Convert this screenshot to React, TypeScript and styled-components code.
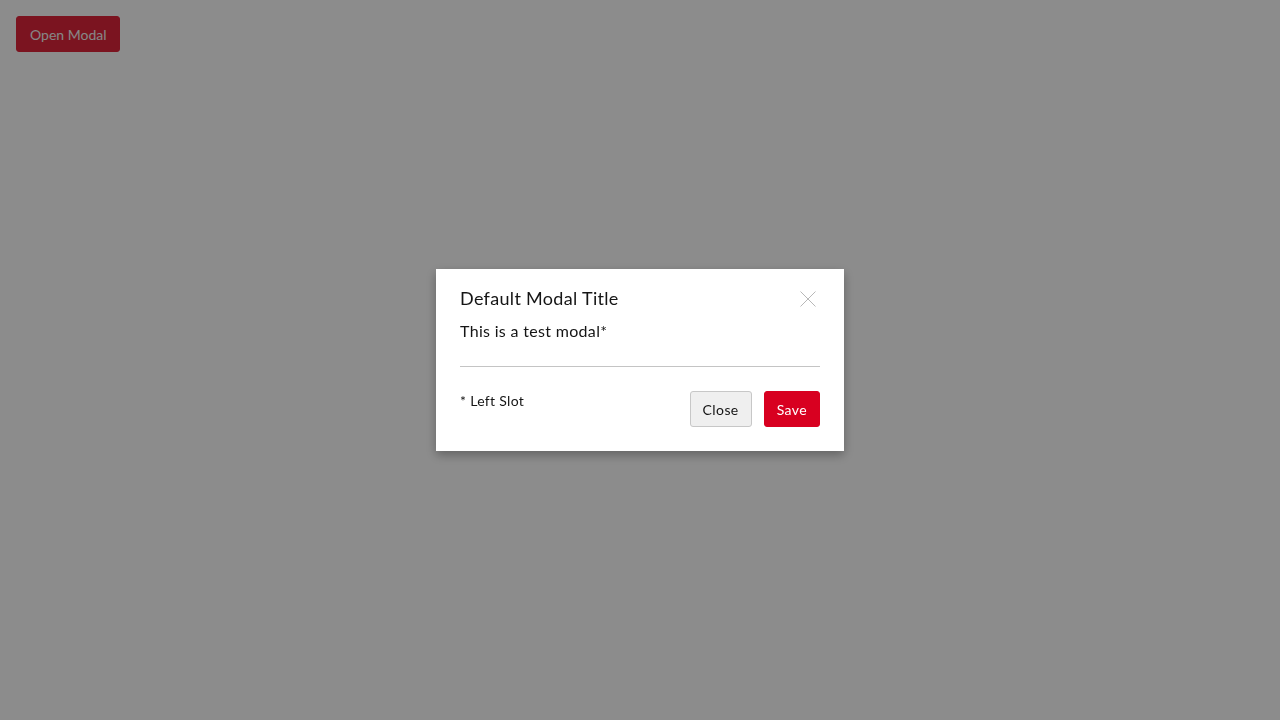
import styled, { createGlobalStyle } from 'styled-components';

const GlobalStyle = createGlobalStyle`
    html, body {
        margin: 0;
        background: #ffffff;
        font-family: 'Lato', 'Open Sans', sans-serif;
        letter-spacing: 0.32px;
        color: #151515;
    }
`;

const App = () => {
    return (
        <>
            <GlobalStyle />
            <StyledPage>
                <StyledTriggerButton $variant="primary">Open Modal</StyledTriggerButton>
            </StyledPage>
            <StyledBackdrop>
                <StyledModal role="dialog" aria-labelledby="modal-title">
                    <StyledHeader>
                        <StyledTitle id="modal-title">Default Modal Title</StyledTitle>
                        <StyledCloseIcon aria-label="Close">
                            <svg width="16" height="16" viewBox="0 0 16 16">
                                <path
                                    d="M0.5 0.5 L15.5 15.5 M15.5 0.5 L0.5 15.5"
                                    stroke="#b8b8b8"
                                    strokeWidth="1"
                                    fill="none"
                                />
                            </svg>
                        </StyledCloseIcon>
                    </StyledHeader>
                    <StyledBody>This is a test modal*</StyledBody>
                    <StyledDivider />
                    <StyledFooter>
                        <StyledLeftSlot>* Left Slot</StyledLeftSlot>
                        <StyledActions>
                            <StyledButton $variant="secondary">Close</StyledButton>
                            <StyledButton $variant="primary">Save</StyledButton>
                        </StyledActions>
                    </StyledFooter>
                </StyledModal>
            </StyledBackdrop>
        </>
    );
};

const StyledPage = styled.div`
    display: flex;
    padding: 16px;
    min-height: 100vh;
    box-sizing: border-box;
    align-items: flex-start;
`;

const StyledButton = styled.button<{ $variant: 'primary' | 'secondary' }>`
    height: 36px;
    padding: 0 12px;
    font-family: inherit;
    font-size: 14px;
    letter-spacing: 0.4px;
    border-radius: 3px;
    cursor: pointer;
    border: 1px solid
        ${({ $variant }) => ($variant === 'primary' ? '#d80020' : '#c7c7c7')};
    background-color: ${({ $variant }) =>
        $variant === 'primary' ? '#d80020' : '#efefef'};
    color: ${({ $variant }) => ($variant === 'primary' ? '#ffffff' : '#151515')};
`;

// the trigger sits in its hover state behind the backdrop
const StyledTriggerButton = styled(StyledButton)`
    letter-spacing: 0;
    padding: 0 12px 0 13px;
    border-color: #e0263b;
    background-color: #e0263b;
    color: #f4f4f4;
`;

const StyledBackdrop = styled.div`
    position: fixed;
    inset: 0;
    display: flex;
    align-items: center;
    justify-content: center;
    background-color: rgba(0, 0, 0, 0.45);
`;

const StyledModal = styled.div`
    width: 408px;
    box-sizing: border-box;
    padding: 19px 24px 24px;
    background-color: #ffffff;
    box-shadow: 0 4px 10px rgba(0, 0, 0, 0.3);
    display: flex;
    flex-direction: column;
`;

const StyledHeader = styled.div`
    display: flex;
    align-items: center;
    justify-content: space-between;
`;

const StyledTitle = styled.h2`
    margin: 0;
    font-size: 18px;
    font-weight: 400;
    line-height: 20px;
    color: #151515;
`;

const StyledCloseIcon = styled.div`
    display: flex;
    margin-right: 4px;
    margin-top: 2px;
`;

const StyledBody = styled.p`
    margin: 13px 0 0;
    font-size: 16px;
    line-height: 20px;
    color: #151515;
`;

const StyledDivider = styled.div`
    margin-top: 25px;
    border-top: 1px solid #c4c4c4;
`;

const StyledFooter = styled.div`
    display: flex;
    justify-content: space-between;
    align-items: flex-start;
    margin-top: 24px;
`;

const StyledLeftSlot = styled.span`
    font-size: 14px;
    line-height: 20px;
    color: #151515;
`;

const StyledActions = styled.div`
    display: flex;
    gap: 12px;
`;

export default App;
